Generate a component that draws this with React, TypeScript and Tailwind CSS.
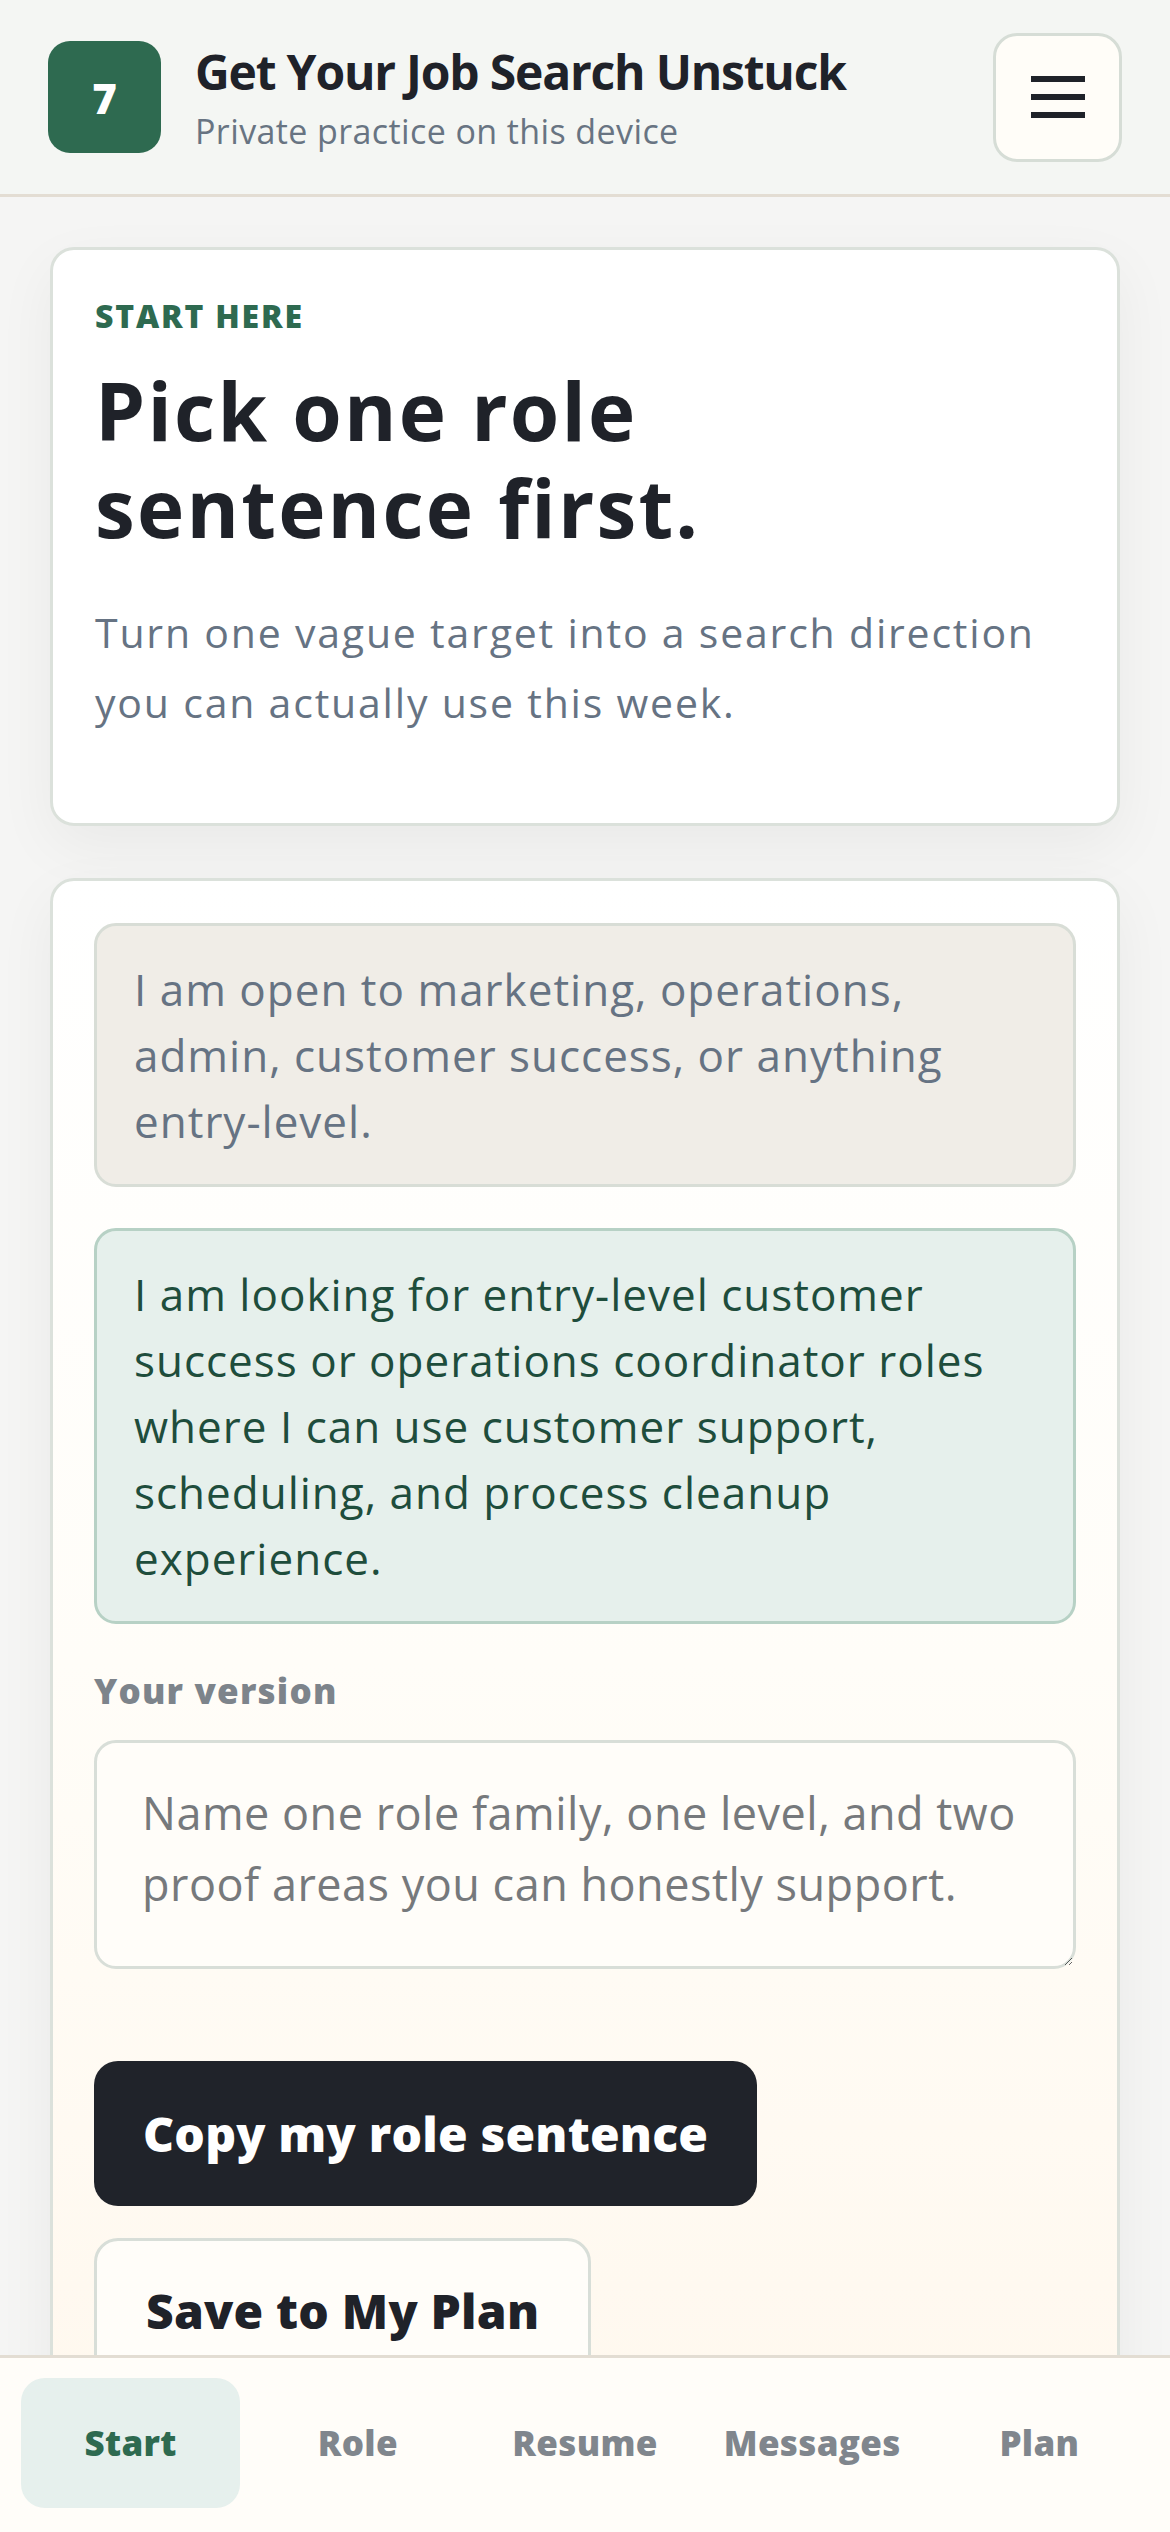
import { useState } from "react";

const tabs = ["Start", "Role", "Resume", "Messages", "Plan"];

export default function App() {
  const [active, setActive] = useState("Start");
  const [text, setText] = useState("");

  return (
    <div className="min-h-screen bg-[#f5f5f4] font-['Open_Sans','Noto_Sans',sans-serif] text-[#1f2229]">
      {/* Header */}
      <header className="h-[197px] flex items-center justify-between px-[48px] bg-[#f4f6f3] border-b-[3px] border-[#e3ddd3]">
        <div className="flex items-center gap-[34px]">
          <div className="w-[113px] h-[112px] rounded-[22px] bg-[#2e6a50] flex items-center justify-center text-white text-[42px] font-extrabold">
            7
          </div>
          <div className="flex flex-col pt-[6px]">
            <div className="text-[48px] leading-[58px] font-bold tracking-[-1.2px]">Get Your Job Search Unstuck</div>
            <div className="mt-[4px] text-[34px] leading-[52px] text-[#687482] tracking-[0.4px]">Private practice on this device</div>
          </div>
        </div>
        <button className="w-[129px] h-[129px] rounded-[24px] bg-[#fffdf8] border-[3px] border-[#d6ddd6] flex flex-col items-center justify-center gap-[12px]">
          <span className="block w-[54px] h-[6px] bg-[#1f2229]" />
          <span className="block w-[54px] h-[6px] bg-[#1f2229]" />
          <span className="block w-[54px] h-[6px] bg-[#1f2229]" />
        </button>
      </header>

      <main className="px-[50px] pt-[50px] pb-[220px] flex flex-col gap-[52px]">
        {/* Intro card */}
        <section className="bg-white border-[3px] border-[#dbe1db] rounded-[24px] px-[42px] pt-[42px] pb-[86px] shadow-[0_20px_60px_rgba(0,0,0,0.05)]">
          <div className="text-[32px] leading-[48px] font-extrabold text-[#2e6a50] uppercase tracking-[1.8px]">Start here</div>
          <h1 className="mt-[21px] max-w-[720px] text-[80px] leading-[97px] font-bold tracking-[2.2px]">
            Pick one role sentence first.
          </h1>
          <p className="mt-[42px] text-[41px] leading-[70px] text-[#667383] tracking-[1.8px]">
            Turn one vague target into a search direction you can actually use this week.
          </p>
        </section>

        {/* Exercise card */}
        <section className="bg-gradient-to-b from-white via-[#fffdf8] to-[#fff8ee] border-[3px] border-[#dbe1db] rounded-[24px] px-[41px] pt-[42px] pb-[60px] shadow-[0_20px_60px_rgba(0,0,0,0.05)]">
          <div className="bg-[#f0ede7] border-[3px] border-[#d8ddd6] rounded-[22px] px-[37px] py-[30px] text-[44px] leading-[66px] text-[#667383] tracking-[1px]">
            I am open to marketing, operations, admin, customer success, or anything entry-level.
          </div>
          <div className="mt-[41px] bg-[#e6f0ec] border-[3px] border-[#b7d1c5] rounded-[22px] px-[37px] py-[30px] text-[44px] leading-[66px] text-[#1e4d3c] tracking-[1px]">
            I am looking for entry-level customer success or operations coordinator roles where I can use customer support, scheduling, and process cleanup experience.
          </div>

          <label className="block mt-[43px] text-[35px] leading-[48px] font-extrabold text-[#7d848b] tracking-[1.2px]">Your version</label>
          <textarea
            value={text}
            onChange={(e) => setText(e.target.value)}
            placeholder="Name one role family, one level, and two proof areas you can honestly support."
            className="mt-[25px] block w-full h-[229px] bg-[#fffdf9] border-[3px] border-[#d8ded8] rounded-[22px] px-[45px] py-[34px] text-[45px] leading-[71px] tracking-[0.5px] text-[#1f2229] placeholder:text-[#76797c] outline-none"
          />

          <div className="mt-[92px] flex flex-col items-start gap-[32px]">
            <button className="h-[145px] px-[49px] rounded-[24px] bg-[#20232a] text-white text-[48px] font-extrabold tracking-[0.2px]">
              Copy my role sentence
            </button>
            <button className="h-[145px] px-[49px] rounded-[24px] bg-[#fffdf9] border-[3px] border-[#d8ded8] text-[#1f2229] text-[48px] font-extrabold tracking-[0.2px]">
              Save to My Plan
            </button>
          </div>
        </section>
      </main>

      {/* Bottom nav */}
      <nav className="fixed bottom-0 left-0 right-0 h-[177px] bg-[#fffdf9] border-t-[3px] border-[#e3ddd3] px-[21px] pt-[20px] pb-[24px] grid grid-cols-5 gap-[8px]">
        {tabs.map((t) => (
          <button
            key={t}
            onClick={() => setActive(t)}
            className={
              t === active
                ? "h-[130px] rounded-[24px] bg-[#e6f0ed] text-[#2e6a50] text-[35px] font-extrabold tracking-[0.3px]"
                : "h-[130px] rounded-[24px] text-[#80868d] text-[35px] font-extrabold tracking-[0.3px]"
            }
          >
            {t}
          </button>
        ))}
      </nav>
    </div>
  );
}
